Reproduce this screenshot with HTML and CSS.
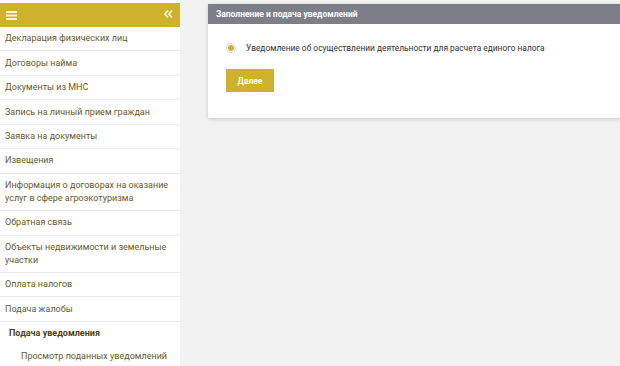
FILE: index.html
```html
<!DOCTYPE html>
<html lang="ru">
<head>
<meta charset="utf-8">
<link rel="stylesheet" href="styles.css">
</head>
<body>
<aside class="sidebar">
  <div class="sidebar-head">
    <svg class="burger" width="11" height="9" viewBox="0 0 11 9"><rect x="0" y="0" width="11" height="2" fill="#fbf3cf"/><rect x="0" y="3.5" width="11" height="2" fill="#fbf3cf"/><rect x="0" y="7" width="11" height="2" fill="#fbf3cf"/></svg>
    <svg class="collapse" width="9" height="8" viewBox="0 0 9 8"><path d="M4 0.5 L1 4 L4 7.5 M8 0.5 L5 4 L8 7.5" fill="none" stroke="#fbf3cf" stroke-width="1.8"/></svg>
  </div>
  <nav class="menu">
    <div class="item">Декларация физических лиц</div>
    <div class="item">Договоры найма</div>
    <div class="item">Документы из МНС</div>
    <div class="item">Запись на личный прием граждан</div>
    <div class="item">Заявка на документы</div>
    <div class="item">Извещения</div>
    <div class="item">Информация о договорах на оказание услуг в сфере агроэкотуризма</div>
    <div class="item">Обратная связь</div>
    <div class="item">Объекты недвижимости и земельные участки</div>
    <div class="item">Оплата налогов</div>
    <div class="item">Подача жалобы</div>
    <div class="item active">Подача уведомления</div>
    <div class="item sub">Просмотр поданных уведомлений</div>
  </nav>
</aside>
<main class="content">
  <section class="panel">
    <div class="panel-head">Заполнение и подача уведомлений</div>
    <div class="panel-body">
      <label class="radio-row"><span class="radio"><span class="dot"></span></span><span>Уведомление об осуществлении деятельности для расчета единого налога</span></label>
      <button class="btn">Далее</button>
    </div>
  </section>
</main>
</body>
</html>
```
FILE: styles.css
```css
html, body { margin: 0; padding: 0; }
body {
  display: flex;
  width: 620px;
  height: 366px;
  overflow: hidden;
  background: #f2f2f2;
  font-family: Roboto, "Liberation Sans", sans-serif;
}
.sidebar {
  width: 180px;
  flex: none;
  background: #fff;
  padding-top: 3px;
  box-sizing: border-box;
}
.sidebar-head {
  height: 24px;
  background: #cfb22c;
  display: flex;
  align-items: center;
  justify-content: space-between;
  padding: 0 7px 0 6px;
}
.burger { display: block; margin-top: 1px; }
.collapse { display: block; margin-top: -2px; }
.menu { display: flex; flex-direction: column; }
.item {
  font-size: 9px;
  line-height: 13px;
  color: #6a5a2a;
  padding: 5.22px 5px;
  border-bottom: 1px solid #ebebeb;
}
.item.active {
  font-weight: bold;
  color: #4f3f12;
  padding-left: 9px;
  border-bottom: none;
}
.item.sub {
  padding-left: 21px;
  border-bottom: none;
}
.content {
  flex: 1;
  padding: 4px 0 0 28px;
  min-width: 0;
}
.panel {
  background: #fff;
  width: 420px;
  box-shadow: 0 1px 4px rgba(0,0,0,0.18);
}
.panel-head {
  height: 20px;
  background: #7c7e88;
  color: #fff;
  font-size: 8.5px;
  font-weight: bold;
  line-height: 20px;
  padding-left: 8px;
}
.panel-body {
  padding: 18px 18px 26px;
  display: flex;
  flex-direction: column;
  align-items: flex-start;
  gap: 15px;
}
.radio-row {
  display: flex;
  align-items: center;
  gap: 10px;
  font-size: 8.4px;
  color: #333;
  line-height: 12px;
}
.radio {
  width: 8px;
  height: 8px;
  border: 1px solid #ddd;
  border-radius: 50%;
  display: flex;
  align-items: center;
  justify-content: center;
  box-shadow: 0 0 1px #ccc;
}
.dot {
  width: 6px;
  height: 6px;
  border-radius: 50%;
  background: #cfb22c;
}
.btn {
  width: 48px;
  height: 23px;
  border: none;
  background: #cfb22c;
  color: #fff;
  font-family: Roboto, "Liberation Sans", sans-serif;
  font-size: 8.5px;
  font-weight: bold;
  padding: 0;
}
```
